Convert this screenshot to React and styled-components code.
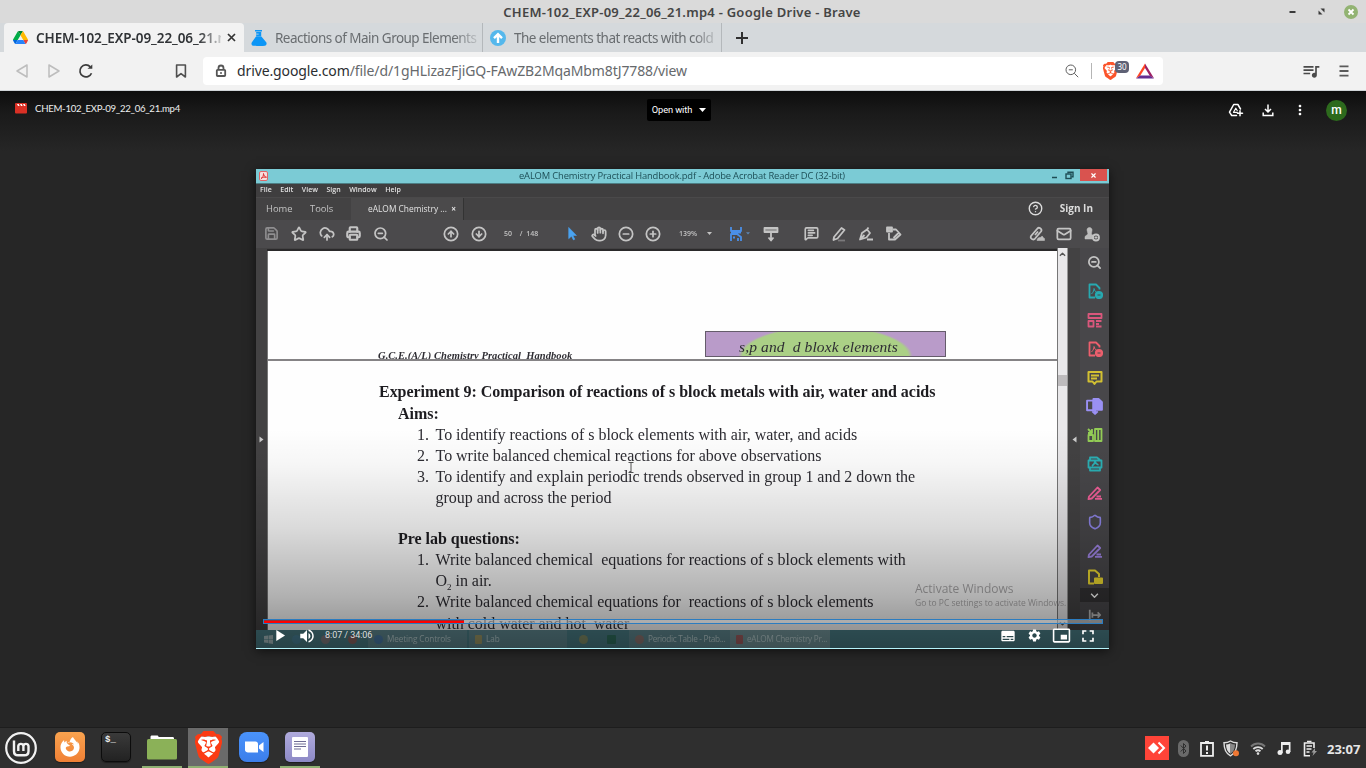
import React from "react";
import styled, { createGlobalStyle, css } from "styled-components";
import {
  Save, Star, CloudUpload, Printer, ZoomOut, CircleArrowUp, CircleArrowDown, Hand,
  CircleMinus, CirclePlus, MessageSquareText, Mail, CircleHelp, Shield, X,
} from "lucide-react";
import {
  MdMoreVert, MdQueueMusic, MdSubtitles,
  MdSettings, MdPictureInPictureAlt, MdFullscreen, MdPlayArrow, MdVolumeUp,
} from "react-icons/md";
import { SiBrave } from "react-icons/si";
import { FaFirefoxBrowser } from "react-icons/fa";

const GlobalStyle = createGlobalStyle`
  html, body { margin: 0; padding: 0; background: #262626; }
  * { box-sizing: border-box; }
  svg { display: block; flex: none; }
`;

const ui = `"Noto Sans", "Open Sans", sans-serif`;

const Screen = styled.div`
  width: 1366px;
  height: 768px;
  overflow: hidden;
  display: flex;
  flex-direction: column;
  font-family: ${ui};
`;

/* ---------- window chrome ---------- */
const TitleBar = styled.header`
  height: 23px;
  flex: none;
  background: #dadada;
  display: grid;
  grid-template-columns: 1fr auto 1fr;
  align-items: center;
  padding: 0 8px 0 6px;
`;
const WindowTitle = styled.h1`
  grid-column: 2;
  margin: 0;
  font-size: 13px;
  font-weight: 600;
  line-height: 18px;
  letter-spacing: ${(p) => p.$ls || 0}px;
  color: #454545;
  white-space: nowrap;
`;
const WindowButtons = styled.div`
  display: flex;
  justify-content: flex-end;
  align-items: center;
  gap: 22px;
  & > :last-child { margin-left: -3px; }
`;
const TabStrip = styled.nav`
  height: 29px;
  flex: none;
  background: #d5d9dc;
  display: flex;
  padding-left: 4px;
`;
const Tab = styled.div`
  width: ${(p) => p.$w}px;
  display: flex;
  align-items: center;
  padding-left: ${(p) => p.$pl}px;
  border-radius: ${(p) => (p.$active ? "4px 4px 0 0" : "0")};
  background: ${(p) => (p.$active ? "#f2f2f2" : "transparent")};
  border-right: ${(p) => (p.$active ? "0" : "1px solid #b4b8bb")};
`;
const TabLabel = styled.span`
  margin-left: 8px;
  width: ${(p) => p.$w}px;
  overflow: hidden;
  white-space: nowrap;
  font-size: 13.5px;
  line-height: 20px;
  font-weight: ${(p) => (p.$active ? 600 : 400)};
  letter-spacing: ${(p) => p.$ls || 0}px;
  color: ${(p) => (p.$active ? "#303336" : "#696d70")};
  mask-image: linear-gradient(to right, #000 88%, #0003);
`;
const TabClose = styled.span`
  margin-left: 6px;
`;
const NewTab = styled.span`
  display: flex;
  align-items: center;
  padding-left: 14px;
`;

const ToolBar = styled.div`
  height: 39px;
  flex: none;
  background: #f2f2f2;
  border-bottom: 1px solid #cfd3d6;
  display: flex;
  align-items: center;
  padding-left: 14px;
`;
const NavButtons = styled.div`
  width: 189px;
  display: flex;
  align-items: center;
  gap: 16px;
`;
const BookmarkSlot = styled.span`
  margin-left: 64px;
`;
const AddressField = styled.div`
  width: 960px;
  height: 28px;
  border-radius: 4px;
  background: #fff;
  display: flex;
  align-items: center;
  padding: 0 9px 0 12px;
`;
const Url = styled.span`
  margin: 0 0 2px 10px;
  flex: 1;
  font-size: 14px;
  letter-spacing: ${(p) => p.$ls || 0}px;
  color: #66696c;
  white-space: nowrap;
  b { font-weight: 400; color: #2b2e31; }
`;
const Rule = styled.span`
  width: 1px;
  height: 16px;
  background: #b5b5b5;
  margin: 0 11px 0 12px;
`;
const BraveShield = styled.span`
  position: relative;
  width: 33px;
  height: 20px;
  display: flex;
  align-items: center;
`;
const ShieldCount = styled.span`
  position: absolute;
  left: 12px;
  top: 0;
  width: 14px;
  height: 12px;
  border-radius: 4px;
  background: #5e6175;
  color: #fff;
  font-size: 8px;
  line-height: 12px;
  text-align: center;
`;
const ToolBarEnd = styled.div`
  flex: 1;
  display: flex;
  justify-content: flex-end;
  align-items: center;
  gap: 17px;
  padding-right: 16px;
`;

/* ---------- drive viewer ---------- */
const Viewer = styled.main`
  flex: 1;
  display: flex;
  flex-direction: column;
  align-items: center;
  background: linear-gradient(#0d0d0d 0, #1a1a1a 22px, #262626 60px);
`;
const ViewerBar = styled.div`
  width: 100%;
  height: 38px;
  display: grid;
  grid-template-columns: 1fr auto 1fr;
  align-items: center;
  color: #fff;
  font-size: 10px;
`;
const FileName = styled.div`
  display: flex;
  align-items: center;
  gap: 8px;
  padding: 0 0 3px 15px;
  font: 9.6px/12px Lato, ${ui};
  letter-spacing: ${(p) => p.$ls || 0}px;
  color: #eee;
`;
const OpenWith = styled.button`
  width: 64px;
  height: 22px;
  margin-right: 8px;
  border: 0;
  border-radius: 2px;
  background: #000;
  color: #fff;
  display: flex;
  align-items: center;
  justify-content: center;
  gap: 7px;
  padding: 0 0 1px;
  font: 9.3px Roboto, sans-serif;
  letter-spacing: -0.1px;
`;
const ViewerActions = styled.div`
  display: flex;
  justify-content: flex-end;
  align-items: center;
  gap: 16px;
  padding-right: 19px;
`;
const Avatar = styled.span`
  width: 21px;
  height: 21px;
  border-radius: 50%;
  margin-left: 2px;
  background: #2d6a1d;
  display: flex;
  align-items: center;
  justify-content: center;
  font: 500 12px/20px Roboto, sans-serif;
`;

/* ---------- video ---------- */
const Video = styled.section`
  position: relative;
  width: 853px;
  height: 480px;
  margin-top: 40px;
  margin-right: 1px;
  box-shadow: 0 2px 10px #0009;
  overflow: hidden;
`;
const Recording = styled.div`
  height: 480px;
  display: flex;
  flex-direction: column;
  background: #434243;
  color: #c4c4c4;
  filter: blur(0.45px);
`;
const ReaderTitle = styled.div`
  height: 15px;
  flex: none;
  background: #7bcbd5;
  border-bottom: 1px solid #4d7e84;
  display: grid;
  grid-template-columns: 1fr auto 1fr;
  align-items: start;
  padding-left: 3px;
  font: 9.4px/14px "Open Sans", sans-serif;
  color: #1d4f57;
`;
const ReaderCaption = styled.span`
  letter-spacing: ${(p) => p.$ls || 0}px;
  padding-right: 4px;
`;
const ReaderWindowButtons = styled.div`
  display: flex;
  justify-content: flex-end;
  align-items: center;
  gap: 6.5px;
  padding-right: 2px;
  color: #1f4d55;
`;
const RedClose = styled.span`
  width: 27px;
  height: 12px;
  background: #d9534f;
  display: flex;
  align-items: center;
  justify-content: center;
  color: #fff;
`;
const ReaderMenu = styled.div`
  height: 13px;
  flex: none;
  background: #3f3e3f;
  display: flex;
  gap: 8.6px;
  padding-left: 4px;
  font: 600 7px/12px "Open Sans", sans-serif;
  color: #e0e0e0;
`;
const ReaderTabs = styled.div`
  height: 23px;
  flex: none;
  border-top: 1px solid #4a494a;
  display: flex;
  font: 9.4px/21px "Open Sans", sans-serif;
  color: #c3c3c3;
`;
const ReaderTab = styled.span`
  width: ${(p) => p.$w}px;
  padding-left: ${(p) => p.$pl || 0}px;
  white-space: nowrap;
  ${(p) => p.$active && css`
    background: #4b4a4b;
    border-right: 1px solid #333;
    font-size: 8.4px;
    color: #e2e2e2;
  `}
`;
const SignIn = styled.div`
  flex: 1;
  display: flex;
  align-items: center;
  justify-content: flex-end;
  gap: 17px;
  padding: 0 16px 2px 0;
  font-weight: 700;
  font-size: 10px;
  color: #dcdcdc;
`;
const ReaderTools = styled.div`
  height: 28px;
  flex: none;
  background: #4b4a4c;
  display: flex;
  align-items: center;
  padding-bottom: 1px;
  font: 600 7px/14px "Open Sans", sans-serif;
  color: #c2c2c2;
`;
const Slot = styled.span`
  width: ${(p) => p.$w || 18}px;
  flex: none;
  margin-left: ${(p) => p.$ml}px;
  display: flex;
  justify-content: center;
  white-space: pre;
`;
const ReaderBody = styled.div`
  flex: 1;
  min-height: 0;
  display: flex;
`;
const Gutter = styled.div`
  width: ${(p) => p.$w}px;
  display: flex;
  align-items: center;
  justify-content: center;
`;
const Document = styled.article`
  width: 790px;
  margin-top: 3px;
  border-left: 1px solid #777;
  background: #fefefe;
  box-shadow: 0 -2px 0 #2a292a;
  font-family: "Liberation Serif", "Times New Roman", serif;
  color: #2e2d33;
  overflow: hidden;
`;
const PageTop = styled.div`
  height: 110px;
  border-bottom: 2px solid #858385;
  overflow: hidden;
  display: flex;
  padding-left: 110px;
`;
const RunningHead = styled.span`
  width: 327px;
  flex: none;
  padding-top: 99px;
  white-space: pre;
  font: italic bold 10.5px/12px "Liberation Serif", serif;
  letter-spacing: ${(p) => p.$ls || 0}px;
`;
const ChapterBadge = styled.span`
  width: 241px;
  height: 26px;
  margin-top: 80px;
  border: 1px solid #655c6b;
  background: radial-gradient(ellipse 88px 31px at 50% 102%, #abd086 0 94%, #b99bc9 99%);
  text-align: center;
  white-space: pre;
  font: italic 15.5px/29px "Liberation Serif", serif;
  letter-spacing: ${(p) => p.$ls || 0}px;
  padding-right: 14px;
`;
const PageBody = styled.div`
  padding: 20.4px 0 0 111px;
  font-size: 16px;
  line-height: 21.15px;
  letter-spacing: -0.03px;
  white-space: pre;
`;
const Heading = styled.h2`
  margin: 0 0 0 ${(p) => p.$indent || 0}px;
  font-size: 16px;
  line-height: 21.15px;
  color: #1d1c20;
`;
const Item = styled.p`
  margin: 0 0 0 38px;
  display: grid;
  grid-template-columns: 18.5px auto;
  sub { font-size: 9px; line-height: 0; }
`;
const BlankLine = styled.div`
  height: 19.6px;
`;
const ScrollTrack = styled.div`
  width: 11px;
  background: #e9e8ea;
  border-left: 1px solid #777;
  border-right: 1px solid #999;
  display: flex;
  flex-direction: column;
  align-items: center;
  justify-content: space-between;
  padding: 3px 0;
`;
const ScrollThumb = styled.span`
  width: 9px;
  height: 11px;
  background: #bdbbbd;
  margin-bottom: 117px;
`;
const SidePanel = styled.aside`
  width: 29px;
  background: #48474a;
  display: flex;
  flex-direction: column;
`;
const PanelCell = styled.span`
  height: ${(p) => p.$h || 28.85}px;
  flex: none;
  display: flex;
  align-items: center;
  justify-content: center;
  background: ${(p) => p.$bg || "transparent"};
`;
const HostTaskbar = styled.div`
  height: 19px;
  flex: none;
  background: #4b7f88;
  border-bottom: 1px solid #b6f4fb;
  display: flex;
  align-items: center;
  color: #bed4d6;
  font: 8.2px/18px "Open Sans", sans-serif;
`;
const StartButton = styled.span`
  margin-left: 8px;
`;
const HostTask = styled.span`
  width: ${(p) => p.$w}px;
  height: 18px;
  margin-left: ${(p) => p.$ml || 0}px;
  padding-left: 6px;
  display: flex;
  align-items: center;
  gap: ${(p) => p.$gap || 4}px;
  background: ${(p) => p.$bg || "#73939988"};
  white-space: nowrap;
  letter-spacing: ${(p) => p.$ls || 0}px;
`;
const Dot = styled.i`
  width: ${(p) => p.$s || 9}px;
  height: 9px;
  margin-left: ${(p) => p.$ml || 0}px;
  border-radius: ${(p) => p.$r || 5}px;
  background: ${(p) => p.$c};
  opacity: 0.6;
  flex: none;
`;
const Watermark = styled.div`
  position: absolute;
  left: 659px;
  top: 412px;
  color: #8c8a8c;
  font: 12px/15px "Open Sans", sans-serif;
  opacity: 0.7;
  filter: blur(0.3px);
  white-space: nowrap;
`;
const WatermarkHint = styled.div`
  font-size: 8.5px;
  line-height: 13px;
`;
const TextCursor = styled.svg`
  position: absolute;
  left: 371px;
  top: 292px;
`;
const PlayerShade = styled.div`
  position: absolute;
  inset: 260px 0 1px 0;
  background: linear-gradient(transparent 0, rgba(0, 0, 0, 0.03) 16%, rgba(0, 0, 0, 0.14) 45%, rgba(0, 0, 0, 0.3) 76%, rgba(0, 0, 0, 0.47) 100%);
`;
const Seek = styled.div`
  position: absolute;
  left: 7px;
  right: 6px;
  top: 450px;
  height: 5px;
  border: 1px solid #2b7cc0;
  background: #bbbbbb88;
`;
const Played = styled.div`
  width: 200px;
  height: 3px;
  background: linear-gradient(#8a3440 0 1px, #f00 1px 3px);
`;
const Controls = styled.div`
  position: absolute;
  left: 14px;
  right: 11px;
  bottom: 3.5px;
  height: 20px;
  display: flex;
  align-items: center;
  color: #fff;
`;
const Control = styled.span`
  margin-left: ${(p) => p.$ml || 0}px;
`;
const Time = styled.span`
  margin: 0 auto 1px 9px;
  font: 9px/18px Roboto, sans-serif;
  letter-spacing: -0.05px;
  color: #ddd;
`;

/* ---------- desktop panel ---------- */
const Panel = styled.footer`
  height: 41px;
  flex: none;
  background: #2f2f2f;
  border-top: 1px solid #1d1d1d;
  display: flex;
  align-items: stretch;
  padding-left: 1px;
`;
const Launcher = styled.span`
  width: 40px;
  margin-left: ${(p) => p.$ml ?? 6}px;
  display: flex;
  align-items: center;
  justify-content: center;
  padding-bottom: ${(p) => (p.$open ? 0 : p.$pb ?? 2)}px;
  background: ${(p) => (p.$active ? "#6a6a6a" : "transparent")};
  border-bottom: ${(p) => (p.$open ? "2px solid #8fb073" : "0")};
`;
const AppTile = styled.span`
  width: 30px;
  height: 30px;
  border-radius: ${(p) => p.$r || 5}px;
  background: ${(p) => p.$bg};
  border: ${(p) => p.$border || "0"};
  box-shadow: 0 1px 1px #0006;
  display: flex;
  align-items: center;
  justify-content: center;
`;
const Terminal = styled(AppTile)`
  align-items: flex-start;
  justify-content: flex-start;
  padding: 2px 3px;
  color: #eee;
  font: bold 9px/10px "Liberation Mono", monospace;
`;
const Tray = styled.div`
  margin-left: auto;
  display: flex;
  align-items: center;
  padding-right: 5px;
`;
const TrayIcon = styled.span`
  width: ${(p) => p.$w}px;
  display: flex;
  justify-content: center;
`;
const Clock = styled.time`
  margin-left: 3px;
  width: 34px;
  font-size: 13px;
  font-weight: 700;
  padding-top: 1px;
  color: #e6e6e6;
`;

/* ---------- drawings ---------- */
const DriveLogo = () => (
  <svg width="15" height="13.4" viewBox="0 0 87.3 78">
    <path fill="#0066da" d="m6.6 66.85 3.85 6.65c.8 1.4 1.95 2.5 3.3 3.3l13.75-23.8h-27.5c0 1.55.4 3.1 1.2 4.5z" />
    <path fill="#00ac47" d="m43.65 25-13.75-23.8c-1.35.8-2.5 1.9-3.3 3.3l-25.4 44a9.06 9.06 0 0 0-1.2 4.5h27.5z" />
    <path fill="#ea4335" d="m73.55 76.8c1.35-.8 2.5-1.9 3.3-3.3l1.6-2.75 7.65-13.25c.8-1.4 1.2-2.95 1.2-4.5h-27.5l5.85 11.5z" />
    <path fill="#00832d" d="m43.65 25 13.75-23.8c-1.35-.8-2.9-1.2-4.5-1.2h-18.5c-1.6 0-3.15.45-4.5 1.2z" />
    <path fill="#2684fc" d="m59.8 53h-32.3l-13.75 23.8c1.35.8 2.9 1.2 4.5 1.2h50.8c1.6 0 3.15-.45 4.5-1.2z" />
    <path fill="#ffba00" d="m73.4 26.5-12.7-22c-.8-1.4-1.95-2.5-3.3-3.3l-13.75 23.8 16.15 28h27.45c0-1.55-.4-3.1-1.2-4.5z" />
  </svg>
);
const Flask = () => (
  <svg width="16" height="16" viewBox="0 0 16 16" fill="#0d96f6">
    <path d="M4 0h7v1.4H4zM5.2 1.9h5v4.3h-5zM5 6.6h5.4l4.8 5.6c.9 1.2.2 3.3-1.4 3.6-4 .3-8 .3-11.8 0C.5 15.5 0 13.4.9 12.2z" />
    <path d="M5.2 4.1h2.5" stroke="#d5d9dc" strokeWidth=".8" />
  </svg>
);
const UpBadge = () => (
  <svg width="16" height="16" viewBox="0 0 16 16">
    <circle cx="8" cy="8" r="8" fill="#55b8ec" />
    <path d="M8 13V4.500M4 8.200l4-4 4 4" fill="none" stroke="#fff" strokeWidth="2.4" />
  </svg>
);
const Cross = () => (
  <svg width="9" height="9" viewBox="0 0 9 9" stroke="#333" strokeWidth="1.7"><path d="M1 1l7 7M8 1 1 8" /></svg>
);
const PlusMark = () => (
  <svg width="12" height="12" viewBox="0 0 12 12" stroke="#303030" strokeWidth="2"><path d="M6 0v12M0 6h12" /></svg>
);
const Triangle = ({ flip }) => (
  <svg width="16" height="16" viewBox="0 0 16 16" fill="none" stroke="#bdbdbd" strokeWidth="1.5" strokeLinejoin="round">
    <path d={flip ? "M3 2v12L13 8z" : "M13 2v12L3 8z"} />
  </svg>
);
const Reload = () => (
  <svg width="16" height="16" viewBox="0 0 16 16" fill="none" stroke="#3c3c3c" strokeWidth="1.7">
    <path d="M13.500 10.200A6 6 0 1 1 12.300 3.800" />
    <path d="M9.500 5.800h4.800V1.500z" fill="#3c3c3c" stroke="none" />
  </svg>
);
const Bookmark = () => (
  <svg width="14" height="16" viewBox="0 0 14 16" fill="none" stroke="#505050" strokeWidth="1.6" strokeLinejoin="round">
    <path d="M2.600 2h8.800v12L7 10.600 2.600 14z" />
  </svg>
);
const Lock = () => (
  <svg width="12" height="14" viewBox="0 0 12 14" fill="none" stroke="#565656" strokeWidth="1.8">
    <rect x="1.8" y="5.8" width="8.4" height="6.2" rx=".8" />
    <path d="M3.500 5.500V4a2.500 2.500 0 0 1 5 0v1.500" />
    <circle cx="6" cy="8.9" r="1" fill="#565656" stroke="none" />
  </svg>
);
const Magnifier = () => (
  <svg width="14" height="14" viewBox="0 0 14 14" fill="none" stroke="#5f5f5f" strokeWidth="1">
    <circle cx="5.8" cy="5.8" r="4.8" /><path d="M9.300 9.300l3.900 3.900M3.800 5.800h4" />
  </svg>
);
const BraveMark = ({ w, h, color }) => (
  <svg width={w} height={h} viewBox="2 0 20 24" preserveAspectRatio="none">
    <path d="M5 4h14l2 5-3 9-6 4.500L6 18 3 9z" fill="#fff" />
    <SiBrave size={24} color={color} />
  </svg>
);
const BatMark = () => (
  <svg width="18" height="16" viewBox="0 0 18 16">
    <path d="M9 .5 9 5 4.200 12.700 0 15.300z" fill="#ff4724" />
    <path d="M9 .5V5l4.800 7.700 4.200 2.600z" fill="#9e1f63" />
    <path d="M0 15.500h18l-4.200-3H4.200z" fill="#662d91" />
  </svg>
);
const Hamburger = () => (
  <svg width="12" height="12" viewBox="0 0 12 12" stroke="#5a5a5a" strokeWidth="1.8">
    <path d="M1.500 1.300h9M1.500 6h9M1.500 10.700h9" />
  </svg>
);
const Minimise = () => (
  <svg width="7" height="8" viewBox="0 0 7 8"><path d="M.5 4h6" stroke="#3a3a3a" strokeWidth="2" /></svg>
);
const Restore = () => (
  <svg width="7" height="7" viewBox="0 0 7 7" fill="#3a3a3a"><path d="M2.500.5h4v4zM.5 2.500v4h4z" /></svg>
);
const RoundClose = () => (
  <svg width="14" height="14" viewBox="0 0 14 14">
    <circle cx="7" cy="7" r="7" fill="#92b372" />
    <path d="M4.500 4.500l5 5M9.500 4.500l-5 5" stroke="#fff" strokeWidth="1.8" />
  </svg>
);
const ClapBoard = () => (
  <svg width="12" height="11" viewBox="0 0 12 11">
    <rect width="12" height="10.6" rx="1" fill="#d93025" />
    <path d="M2 1h1.700l.9 2H3zM5 1h1.700l.9 2H6zM8 1h1.700l.9 2H9z" fill="#fff" />
  </svg>
);
const AddToDrive = () => (
  <svg width="16" height="16" viewBox="0 0 16 16" fill="none" stroke="#fff" strokeWidth="1.5" strokeLinejoin="round" strokeLinecap="round">
    <path d="M8.500 13.500H3.700L1.500 10.200 5.700 2.500h4.200l2.600 4.500" />
    <path d="M9.300 10.300H5.500L7.800 6.200l1.400 2.300" strokeWidth="1.2" />
    <path d="M12 8.800v5M9.500 11.300h5" />
  </svg>
);
const Download = () => (
  <svg width="16" height="16" viewBox="0 0 16 16" fill="none" stroke="#fff" strokeWidth="1.5">
    <path d="M8 2.500v7.500M5 7l3 3 3-3M3.200 10.500v3h9.600v-3" />
  </svg>
);
const Caret = ({ w = 7, color = "currentColor" }) => (
  <svg width={w} height={w / 2 + 0.5} viewBox="0 0 8 4.5" fill={color}><path d="M0 0h8L4 4.500z" /></svg>
);
const Glyph = ({ s = 15, c = "#c4c4c4", sw = 1.8, children }) => (
  <svg width={s} height={s} viewBox="0 0 16 16" fill="none" stroke={c} strokeWidth={sw} strokeLinejoin="round">{children}</svg>
);
const PdfPage = ({ c }) => (
  <Glyph c={c} s={16}>
    <path d="M12.500 6.500V5L9 1.500H2.500v13H8" />
    <path d="M4.500 11c2-2 2.600-4 2.500-5.500C7.500 8 9 9.500 11 9.500" strokeWidth="1" />
    <circle cx="12" cy="12" r="3.2" fill={c} />
    <path d="M10.500 12h3" stroke="#48474a" strokeWidth="1" />
  </Glyph>
);
const Pen = ({ c }) => (
  <Glyph c={c} s={16}><path d="M2 11.500 10.500 2.500l2.700 2.500-8.500 8.500-3.200.7zM8 13.800h7M9.500 11.500h4.500" /></Glyph>
);
const MintLogo = () => (
  <svg width="32" height="32" viewBox="0 0 32 32" fill="none" stroke="#f2f2f2">
    <circle cx="16" cy="16" r="14.8" strokeWidth="2.2" />
    <path d="M9 8.500v10.800c0 2.500 1.500 4 4 4h6.500c2.500 0 4-1.500 4-4V14a2.600 2.600 0 0 0-5.100 0v5M18.400 14a2.600 2.600 0 0 0-5.100 0v5" strokeWidth="2.4" />
  </svg>
);
const Folder = () => (
  <svg width="30" height="25" viewBox="0 0 30 25">
    <path d="M3.500 5V2c0-1 .5-1.500 1.500-1.500h5c1 0 1.500.5 1.500 1.500h14c1 0 1.500.5 1.500 1.500V6h-23z" fill="#fff" />
    <rect x="0" y="4" width="30" height="20.5" rx="1.5" fill="#8bb158" />
  </svg>
);
const Note = () => (
  <svg width="16" height="20" viewBox="0 0 16 20">
    <rect width="16" height="20" rx="1" fill="#fff" />
    <path d="M2 4.500h12M2 7h12M2 9.500h12M2 12h7" stroke="#6f6c94" />
  </svg>
);
const Camera = () => (
  <svg width="19" height="12" viewBox="0 0 19 12" fill="#fff">
    <path d="M0 .5h10.500c1.500 0 2.500 1 2.500 2.500v8.500H3C1.500 11.500 0 10.500 0 9zM14 4.500 18.500 1v10L14 7.500z" />
  </svg>
);
const AnyDesk = () => (
  <svg width="24" height="24" viewBox="0 0 24 24">
    <rect width="24" height="24" fill="#ff4438" />
    <path d="M8.500 6.500 14 12l-5.500 5.500L3 12z" fill="#fff" />
    <path d="M13.500 6.500 19 12l-5.500 5.500" fill="none" stroke="#fff" strokeWidth="2" />
  </svg>
);
const BluetoothOff = () => (
  <svg width="11" height="17" viewBox="0 0 11 17">
    <rect width="11" height="17" rx="5.5" fill="#6a6a6a" />
    <path d="M2.800 5.500 8 11l-2.500 2.500v-10L8 6l-5.200 5.500" fill="none" stroke="#2f2f2f" />
  </svg>
);
const ClipAlert = () => (
  <svg width="14" height="17" viewBox="0 0 14 17" fill="none" stroke="#eee" strokeWidth="1.8">
    <path d="M1 3h12v12.800H1z" /><path d="M5 2h4M7 5.500v5M7 12v2" strokeWidth="2" />
  </svg>
);
const UpdateShield = () => (
  <svg width="17" height="17" viewBox="0 0 17 17">
    <path d="M7.500 1C5.500 2.300 3 2.800 1 2.800c0 6 1.500 10.500 6.500 13 5-2.500 6.500-7 6.500-13-2 0-4.500-.5-6.500-1.800z" fill="none" stroke="#ddd" strokeWidth="1.4" />
    <path d="M7.500 3.200C6 4 4.500 4.400 3 4.500c.2 4.500 1.500 7.500 4.500 9.300z" fill="#ddd" />
    <path d="M7.500 3.200C9 4 10.500 4.400 12 4.500c-.2 4.500-1.500 7.500-4.500 9.300z" fill="#888" />
    <circle cx="13" cy="13.2" r="3" fill="#ee7733" />
  </svg>
);
const Wifi = () => (
  <svg width="16" height="13" viewBox="0 0 16 13" fill="none" strokeWidth="1.8">
    <path d="M1 4.500C5 .5 11 .5 15 4.500" stroke="#777" />
    <path d="M3.300 7c2.700-2.600 6.700-2.600 9.400 0" stroke="#ddd" />
    <path d="M5.500 9.300c1.500-1.300 3.500-1.300 5 0" stroke="#ddd" />
    <circle cx="8" cy="11.6" r="1.3" fill="#ddd" />
  </svg>
);
const Notes = () => (
  <svg width="14" height="14" viewBox="0 0 14 14" fill="#eee">
    <path d="M4 1h9.500v10h-1.700V4H5.700v8H4z" /><circle cx="3" cy="11.5" r="2.5" /><circle cx="11" cy="10.8" r="2.3" />
  </svg>
);
const Battery = () => (
  <svg width="15" height="17" viewBox="0 0 15 17" fill="none" stroke="#eee" strokeWidth="1.6">
    <path d="M11 8V3H1.500v12.800H7" /><path d="M4 1.500h4.500M3.500 6h5.500M3.500 9h5M3.500 12h3" strokeWidth="1.7" />
    <path d="m12 8-3.500 4.500h2L9.500 16l4.500-5h-2z" fill="#999" stroke="none" />
  </svg>
);

const hostIcon = { size: 16, color: "#c4c4c4", strokeWidth: 2.6 };

const Reader = () => (
  <Recording>
    <ReaderTitle>
      <svg width="9" height="12" viewBox="0 0 9 12"><rect x=".5" y="2.5" width="8" height="9" rx="1.5" fill="#f4dedd" stroke="#d66" /><path d="M2 9.500c2-1 2.500-3 2.500-5 .3 2 1 3.500 3 3.700-2-.3-4 0-5.500 1.300z" fill="none" stroke="#d33" /></svg>
      <ReaderCaption $ls={-0.16}>eALOM Chemistry Practical Handbook.pdf - Adobe Acrobat Reader DC (32-bit)</ReaderCaption>
      <ReaderWindowButtons>
        <svg width="7" height="10" viewBox="0 0 7 10"><path d="M1 7.500h5" stroke="currentColor" strokeWidth="1.5" /></svg>
        <svg width="9" height="9" viewBox="0 0 9 9" fill="none" stroke="currentColor" strokeWidth="1.4"><rect x="1" y="3" width="5" height="4.5" /><path d="M3 2.500V1.200h5v4.500H6.500" /></svg>
        <RedClose><X size={7} strokeWidth={4} /></RedClose>
      </ReaderWindowButtons>
    </ReaderTitle>
    <ReaderMenu>
      <span>File</span><span>Edit</span><span>View</span><span>Sign</span><span>Window</span><span>Help</span>
    </ReaderMenu>
    <ReaderTabs>
      <ReaderTab $w={54} $pl={10}>Home</ReaderTab>
      <ReaderTab $w={41}>Tools</ReaderTab>
      <ReaderTab $w={113} $pl={17} $active>eALOM Chemistry ... &nbsp;<b>×</b></ReaderTab>
      <SignIn><CircleHelp size={15} strokeWidth={2.2} />Sign In</SignIn>
    </ReaderTabs>
    <ReaderTools>
      <Slot $ml={6}><Save {...hostIcon} size={15} color="#8f8e90" /></Slot>
      <Slot $ml={10}><Star {...hostIcon} /></Slot>
      <Slot $ml={10}><CloudUpload {...hostIcon} /></Slot>
      <Slot $ml={8}><Printer {...hostIcon} strokeWidth={3.4} size={15} /></Slot>
      <Slot $ml={10}><ZoomOut {...hostIcon} /></Slot>
      <Slot $ml={52}><CircleArrowUp {...hostIcon} /></Slot>
      <Slot $ml={10}><CircleArrowDown {...hostIcon} /></Slot>
      <Slot $ml={12} $w={16}>50</Slot>
      <Slot $ml={2} $w={22}>/  148</Slot>
      <Slot $ml={22}><Glyph s={15}><path d="M5 1.500v12l3-2.700 2 4 1.500-.7-2-4h3.800z" fill="#4aa3f0" stroke="#4aa3f0" strokeWidth=".6" /></Glyph></Slot>
      <Slot $ml={10}><Hand {...hostIcon} /></Slot>
      <Slot $ml={9}><CircleMinus {...hostIcon} /></Slot>
      <Slot $ml={9}><CirclePlus {...hostIcon} /></Slot>
      <Slot $ml={15} $w={22}>139%</Slot>
      <Slot $ml={6} $w={8}><Caret w={5} /></Slot>
      <Slot $ml={14}><Glyph s={16} c="#4a8fe8"><path d="M3 1v4h10V1M3 15V8h6l4 3v4M3 6.500h10M5 11.500h2M10 12v3" /></Glyph></Slot>
      <Slot $ml={0} $w={6}><Caret w={4} color="#5d87b5" /></Slot>
      <Slot $ml={11}><Glyph s={16}><path d="M1.500 2h13v4h-13z" fill="#999" /><path d="M8 7v7M5.500 11.500 8 14.500l2.500-3" /></Glyph></Slot>
      <Slot $ml={22}><MessageSquareText {...hostIcon} size={15} /></Slot>
      <Slot $ml={10}><Glyph s={16}><path d="m3 11 7.500-9 3 2-7 8.500-4 1.500z" /><path d="M7 14.500h7" stroke="#7a797b" /></Glyph></Slot>
      <Slot $ml={9}><Glyph s={16}><path d="M2 13.500 4 7l5-3.500 3 3.500-3.500 4.500zM2 13.500 6.500 9M9 3.500l1.500-2M9 13.500h6" /></Glyph></Slot>
      <Slot $ml={10}><Glyph s={16}><path d="M3 7v6.500h6l5.500-5L10 3.500H7M7.500 12l5-5" /><path d="M1 1.500h5v4H1z" fill="#bcbcbc" /></Glyph></Slot>
      <Slot $ml={125}><Glyph s={16}><path d="m2 10 6-7a2.200 2.200 0 0 1 4 2.500L6.500 12A2.200 2.200 0 0 1 2 10zM6 9l3-3.500" /><path d="M8 14.500c0-2 1.500-3 3-3s1.500-1.500 2-1.500 1 2 2.500 2.500v2z" fill="#bcbcbc" strokeWidth=".5" /></Glyph></Slot>
      <Slot $ml={9}><Mail {...hostIcon} /></Slot>
      <Slot $ml={10}><Glyph s={16}><path d="M5.500 1.500a2.500 2.500 0 0 1 2.500 3L7.300 8 10 10v3H1v-2.500L4 8l-1-4c0-1.500 1-2.500 2.500-2.500z" fill="#bcbcbc" strokeWidth=".5" /><circle cx="12" cy="11.5" r="3" fill="#4b4a4c" /><path d="M12 10v3M10.500 11.500h3" strokeWidth="1" /></Glyph></Slot>
    </ReaderTools>
    <ReaderBody>
      <Gutter $w={11}><svg width="5" height="7" viewBox="0 0 5 7"><path d="M.5.5v6l4-3z" fill="#ccc" /></svg></Gutter>
      <Document>
        <PageTop>
          <RunningHead $ls={0.05}>G.C.E.(A/L) Chemistry Practical  Handbook</RunningHead>
          <ChapterBadge $ls={0.12}>s,p and  d bloxk elements</ChapterBadge>
        </PageTop>
        <PageBody>
          <Heading>Experiment 9: Comparison of reactions of s block metals with air, water and acids</Heading>
          <Heading $indent={19}>Aims:</Heading>
          <Item><span>1.</span><span>To identify reactions of s block elements with air, water, and acids</span></Item>
          <Item><span>2.</span><span>To write balanced chemical reactions for above observations</span></Item>
          <Item><span>3.</span><span>{"To identify and explain periodic trends observed in group 1 and 2 down the\ngroup and across the period"}</span></Item>
          <BlankLine />
          <Heading $indent={19}>Pre lab questions:</Heading>
          <Item><span>1.</span><span>{"Write balanced chemical  equations for reactions of s block elements with\nO"}<sub>2</sub> in air.</span></Item>
          <Item><span>2.</span><span>{"Write balanced chemical equations for  reactions of s block elements\nwith cold water and hot  water"}</span></Item>
        </PageBody>
      </Document>
      <ScrollTrack>
        <Glyph s={7} c="#555" sw={3}><path d="M2 11l6-6 6 6" /></Glyph>
        <ScrollThumb />
        <Glyph s={7} c="#555" sw={3}><path d="M2 5l6 6 6-6" /></Glyph>
      </ScrollTrack>
      <Gutter $w={12}><svg width="5" height="7" viewBox="0 0 5 7"><path d="M4.5.5v6l-4-3z" fill="#ccc" /></svg></Gutter>
      <SidePanel>
        <PanelCell><ZoomOut size={15} strokeWidth={2.8} /></PanelCell>
        <PanelCell><PdfPage c="#27a9b0" /></PanelCell>
        <PanelCell><Glyph c="#d9577c" s={16}><path d="M1.500 2h13v4h-13zM1.500 9h5v5.500h-5zM9 9h5.500M9 12h3M9 14.500h5.500" /></Glyph></PanelCell>
        <PanelCell><PdfPage c="#ec5f6d" /></PanelCell>
        <PanelCell><Glyph c="#d2c032" s={16} sw={2}><path d="M1.500 2h13v9.500h-5L7.500 14l-2-2.500h-4zM4 5.500h8M4 8.500h6" /></Glyph></PanelCell>
        <PanelCell><Glyph c="#9a90f4" s={17}><path d="M1 2.500h6v9H1z" /><path d="M7 1h5l3 3v7H7z" fill="#9a90f4" /><path d="M8.500 10v4.500M6 12.500l2.500 2.500 2.500-2.500" /></Glyph></PanelCell>
        <PanelCell><Glyph c="#93cc56" s={16}><path d="M8 2h6.500v12H8zM11.200 2v12M1.500 8v6H6V8zM1 2l4 4M5 2v4H1" /></Glyph></PanelCell>
        <PanelCell><Glyph c="#2bb0b5" s={16}><path d="M3 4V1.500h7L13 4M3 12v2.500h10V12M1.500 4.500h13v7h-13zM5 10c2-1.500 3-3 3-4.500.5 2 1.500 3 3.500 3.500" /></Glyph></PanelCell>
        <PanelCell><Pen c="#f4609a" /></PanelCell>
        <PanelCell><Shield size={16} strokeWidth={2.4} color="#8f86ea" /></PanelCell>
        <PanelCell><Pen c="#a085e6" /></PanelCell>
        <PanelCell $h={23}><Glyph c="#f0dc30" s={16} sw={2}><path d="M7 14.500H2v-13h6L12 5v3" /><path d="M8 9.500h7v4.500H8z" fill="#f0dc30" /></Glyph></PanelCell>
        <PanelCell $h={14} $bg="#333234"><Glyph s={9} c="#fff" sw={2.5}><path d="M2 5l6 6 6-6" /></Glyph></PanelCell>
        <PanelCell $h={26}><Glyph s={14} c="#bbb" sw={2}><path d="M2 2v12M5 8h9M11 5l3 3-3 3M5 5v6" /></Glyph></PanelCell>
      </SidePanel>
    </ReaderBody>
    <HostTaskbar>
      <StartButton>
        <svg width="9" height="9" viewBox="0 0 9 9" fill="#a9bfc2"><path d="M0 1l4-.5V4H0zM4.500.5 9 0v4H4.500zM0 4.500h4V8l-4-.5zM4.500 4.500H9V9l-4.500-.7z" /></svg>
      </StartButton>
      <Dot $ml={19} $c="#4b87a8" /><Dot $ml={20} $c="#a5787a" /><Dot $ml={18} $c="#b8544b" />
      <HostTask $ml={11} $w={99} $ls={-0.1}><Dot $c="#3c72b8" />Meeting Controls</HostTask>
      <HostTask $ml={2} $w={98}><Dot $c="#c9a64d" $s={7} $r={1} />Lab</HostTask>
      <Dot $ml={12} $c="#a89a54" /><Dot $ml={19} $c="#1e6746" $r={1} />
      <HostTask $ml={13} $w={101} $ls={-0.3}><Dot $c="#b06a5f" />Periodic Table - Ptab...</HostTask>
      <HostTask $w={100} $bg="#8fa6aa99" $ls={-0.25}><Dot $c="#c33b3b" $s={7} $r={1} />eALOM Chemistry Pr...</HostTask>
    </HostTaskbar>
  </Recording>
);

const Player = () => (
  <Video>
    <Reader />
    <Watermark>Activate Windows<WatermarkHint>Go to PC settings to activate Windows.</WatermarkHint></Watermark>
    <TextCursor width="8" height="13" viewBox="0 0 8 13" fill="none" stroke="#555"><path d="M1.500 1.500h5M4 1.500v10M1.500 11.500h5" /></TextCursor>
    <PlayerShade />
    <Seek><Played /></Seek>
    <Controls>
      <Control><MdPlayArrow size={19} /></Control>
      <Control $ml={9}><MdVolumeUp size={18} /></Control>
      <Time>8:07 / 34:06</Time>
      <Control><MdSubtitles size={16} /></Control>
      <Control $ml={11}><MdSettings size={15} /></Control>
      <Control $ml={10}><MdPictureInPictureAlt size={19} /></Control>
      <Control $ml={7}><MdFullscreen size={20} /></Control>
    </Controls>
  </Video>
);

export default function App() {
  return (
    <Screen>
      <GlobalStyle />
      <TitleBar>
        <WindowTitle $ls={0.25}>CHEM-102_EXP-09_22_06_21.mp4 - Google Drive - Brave</WindowTitle>
        <WindowButtons><Minimise /><Restore /><RoundClose /></WindowButtons>
      </TitleBar>
      <TabStrip>
        <Tab $w={240} $pl={9} $active>
          <DriveLogo />
          <TabLabel $w={185} $ls={-0.08} $active>CHEM-102_EXP-09_22_06_21.mp4</TabLabel>
          <TabClose><Cross /></TabClose>
        </Tab>
        <Tab $w={239} $pl={7}>
          <Flask />
          <TabLabel $w={203} $ls={-0.53}>Reactions of Main Group Elements</TabLabel>
        </Tab>
        <Tab $w={239} $pl={7}>
          <UpBadge />
          <TabLabel $w={203} $ls={-0.53}>The elements that reacts with cold</TabLabel>
        </Tab>
        <NewTab><PlusMark /></NewTab>
      </TabStrip>
      <ToolBar>
        <NavButtons>
          <Triangle /><Triangle flip /><Reload />
          <BookmarkSlot><Bookmark /></BookmarkSlot>
        </NavButtons>
        <AddressField>
          <Lock />
          <Url $ls={-0.11}><b>drive.google.com</b>/file/d/1gHLizazFjiGQ-FAwZB2MqaMbm8tJ7788/view</Url>
          <Magnifier />
          <Rule />
          <BraveShield><BraveMark w={15} h={18} color="#fb542b" /><ShieldCount>30</ShieldCount></BraveShield>
          <BatMark />
        </AddressField>
        <ToolBarEnd><MdQueueMusic size={20} color="#4a4a4a" /><Hamburger /></ToolBarEnd>
      </ToolBar>
      <Viewer>
        <ViewerBar>
          <FileName $ls={-0.27}><ClapBoard />CHEM-102_EXP-09_22_06_21.mp4</FileName>
          <OpenWith>Open with <Caret w={7} /></OpenWith>
          <ViewerActions>
            <AddToDrive /><Download /><MdMoreVert size={16} />
            <Avatar>m</Avatar>
          </ViewerActions>
        </ViewerBar>
        <Player />
      </Viewer>
      <Panel>
        <Launcher $ml={0} $pb={0}><MintLogo /></Launcher>
        <Launcher $ml={9}><AppTile $bg="linear-gradient(#f9a34f, #f08035)"><FaFirefoxBrowser size={20} color="#fff" /></AppTile></Launcher>
        <Launcher><Terminal $bg="linear-gradient(#3a3a3a, #222)" $border="1px solid #0c0c0c">$_</Terminal></Launcher>
        <Launcher $open><Folder /></Launcher>
        <Launcher $open $active><BraveMark w={27} h={33} color="#fb3b14" /></Launcher>
        <Launcher><AppTile $r={8} $bg="linear-gradient(#4a93fb, #3c7eea)"><Camera /></AppTile></Launcher>
        <Launcher $open><AppTile $bg="linear-gradient(#b0abdc, #8d89c6)"><Note /></AppTile></Launcher>
        <Tray>
          <TrayIcon $w={26}><AnyDesk /></TrayIcon>
          <TrayIcon $w={26}><BluetoothOff /></TrayIcon>
          <TrayIcon $w={22}><ClipAlert /></TrayIcon>
          <TrayIcon $w={27}><UpdateShield /></TrayIcon>
          <TrayIcon $w={26}><Wifi /></TrayIcon>
          <TrayIcon $w={26}><Notes /></TrayIcon>
          <TrayIcon $w={27}><Battery /></TrayIcon>
          <Clock>23:07</Clock>
        </Tray>
      </Panel>
    </Screen>
  );
}
